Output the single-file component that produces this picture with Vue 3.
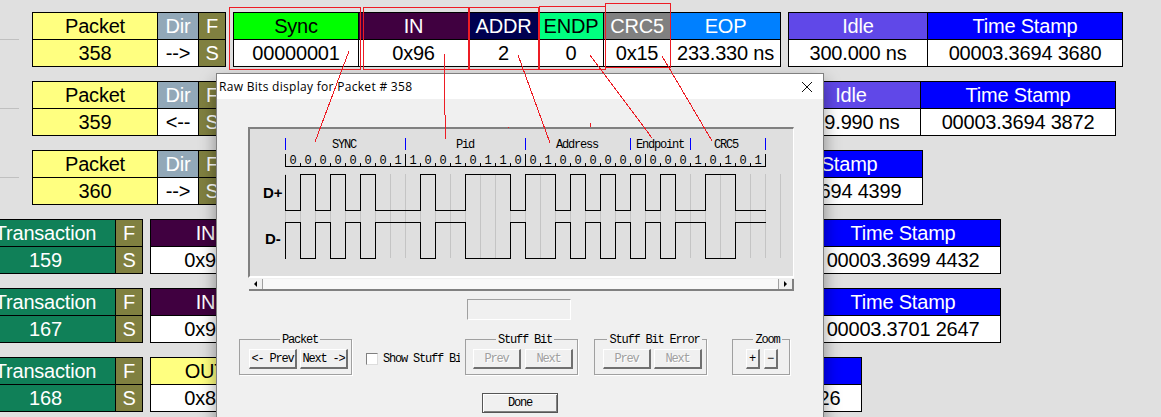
<script setup>
const packetCols = (num, dir) => [
  { title: 'Packet', value: num, width: 125, cls: 'packet' },
  { title: 'Dir', value: dir, width: 41, cls: 'dir' },
  { title: 'F', value: 'S', width: 27, cls: 'flag' },
]
const transCols = (num) => [
  { title: 'Transaction', value: num, width: 140, cls: 'trans' },
  { title: 'F', value: 'S', width: 27, cls: 'flag' },
]
const stamp = (value) => ({ title: 'Time Stamp', value, width: 195, cls: 'stamp' })

// gap = distance from whatever is left of the group
const rows = [
  {
    stub: true,
    groups: [
      { gap: 13, cols: packetCols('358', '-->') },
      {
        gap: 7,
        cols: [
          { title: 'Sync', value: '00000001', width: 125, cls: 'sync' },
          { title: 'IN', value: '0x96', width: 110, cls: 'in' },
          { title: 'ADDR', value: '2', width: 70, cls: 'addr' },
          { title: 'ENDP', value: '0', width: 65, cls: 'endp' },
          { title: 'CRC5', value: '0x15', width: 67, cls: 'crc' },
          { title: 'EOP', value: '233.330 ns', width: 110, cls: 'eop' },
        ],
      },
      {
        gap: 7,
        cols: [{ title: 'Idle', value: '300.000 ns', width: 139, cls: 'idle' }, stamp('00003.3694 3680')],
      },
    ],
  },
  {
    stub: true,
    groups: [
      { gap: 13, cols: packetCols('359', '<--') },
      {
        gap: 555,
        cols: [{ title: 'Idle', value: '299.990 ns', width: 139, cls: 'idle' }, stamp('00003.3694 3872')],
      },
    ],
  },
  {
    stub: true,
    groups: [
      { gap: 13, cols: packetCols('360', '-->') },
      { gap: 501, cols: [stamp('00003.3694 4399')] },
    ],
  },
  {
    groups: [
      { gap: -25, cols: transCols('159') },
      { gap: 7, cols: [{ title: 'IN', value: '0x96', width: 110, cls: 'in' }] },
      { gap: 544, cols: [stamp('00003.3699 4432')] },
    ],
  },
  {
    groups: [
      { gap: -25, cols: transCols('167') },
      { gap: 7, cols: [{ title: 'IN', value: '0x96', width: 110, cls: 'in' }] },
      { gap: 544, cols: [stamp('00003.3701 2647')] },
    ],
  },
  {
    groups: [
      { gap: -25, cols: transCols('168') },
      { gap: 7, cols: [{ title: 'OUT', value: '0x87', width: 110, cls: 'out' }] },
      { gap: 405, cols: [stamp('00003.3703 0026')] },
    ],
  },
]

// waveform
const X0 = 285
const BIT = 15
const bits = '00000001100101100100000000010101'.split('')
const levels = '01010100010011101101010101001100'.split('').map(Number)
const gridX = Array.from({ length: 34 }, (_, i) => X0 + i * BIT)
const tickX = Array.from({ length: 33 }, (_, i) => X0 + i * BIT)
const majorX = [285, 405, 525, 645, 765]
const blueX = [285, 405, 525, 630, 690, 765]
const fields = [
  { name: 'SYNC', x: 344 },
  { name: 'Pid', x: 465 },
  { name: 'Address', x: 577 },
  { name: 'Endpoint', x: 660 },
  { name: 'CRC5', x: 726 },
]

const tracePoints = (high, low, invert) => {
  const pts = []
  let prevY = invert ? low : high
  levels.forEach((l, i) => {
    const y = (invert ? !l : l) ? high : low
    const x = X0 + i * BIT
    pts.push(`${x},${prevY}`, `${x},${y}`)
    prevY = y
  })
  pts.push(`${X0 + 32 * BIT},${prevY}`)
  return pts.join(' ')
}
const dPlus = tracePoints(174, 210, false)
const dMinus = tracePoints(222, 258, true)

const redBoxes = [
  { x: 229.5, y: 7.5, w: 131, h: 62 },
  { x: 363.5, y: 7.5, w: 105, h: 62 },
  { x: 469.5, y: 7.5, w: 69, h: 62 },
  { x: 539.5, y: 6.5, w: 66, h: 63 },
  { x: 605.5, y: 3.5, w: 65, h: 64 },
]
const redLines = [
  '349,51 315,142',
  '444,53 445,115 446,139',
  '518,55 550,143',
  '590,55 652,138',
  '662,56 712,141',
  '508,127 508,128',
  '590,123 590,127',
]
</script>

<template>
  <div class="page">
    <div v-for="(row, r) in rows" :key="r" class="row">
      <div v-if="row.stub" class="stub"></div>
      <div
        v-for="(group, g) in row.groups"
        :key="g"
        class="group"
        :style="{ marginLeft: group.gap + 'px' }"
      >
        <div v-for="col in group.cols" :key="col.title" class="col" :class="col.cls" :style="{ width: col.width + 'px' }">
          <div class="head">{{ col.title }}</div>
          <div class="val">{{ col.value }}</div>
        </div>
      </div>
    </div>

    <div class="dialog">
      <div class="titlebar">
        <span>Raw Bits display for Packet # 358</span>
        <svg class="close" width="10" height="10" viewBox="0 0 10 10">
          <path d="M0 0L10 10M10 0L0 10" stroke="#111" stroke-width="1" fill="none" />
        </svg>
      </div>

      <div class="panel">
        <svg class="wave" width="544" height="147" viewBox="250 129 544 147" shape-rendering="crispEdges">
          <line v-for="x in gridX" :key="x" :x1="x + 0.5" :x2="x + 0.5" y1="174" y2="258" class="grid" />
          <line v-for="x in blueX" :key="x" :x1="x + 0.5" :x2="x + 0.5" y1="138" y2="150" class="blue" />
          <text v-for="f in fields" :key="f.name" :x="f.x" y="148" class="mono" text-anchor="middle">{{ f.name }}</text>
          <line x1="285" x2="766" y1="166.5" y2="166.5" class="ink" />
          <line v-for="x in tickX" :key="x" :x1="x + 0.5" :x2="x + 0.5" y1="163" y2="167" class="ink" />
          <line v-for="x in majorX" :key="x" :x1="x + 0.5" :x2="x + 0.5" y1="154" y2="167" class="ink" />
          <text v-for="(b, i) in bits" :key="i" :x="X0 + i * BIT + 7.5" y="164" class="mono" text-anchor="middle">{{ b }}</text>
          <polyline :points="dPlus" class="trace" transform="translate(0.5 0.5)" />
          <polyline :points="dMinus" class="trace" transform="translate(0.5 0.5)" />
          <text x="263" y="198" class="dlabel">D+</text>
          <text x="265" y="244" class="dlabel">D-</text>
        </svg>
      </div>

      <div class="scrollbar">
        <div class="sb-btn"><i class="arrow-left"></i></div>
        <div class="sb-track"></div>
        <div class="sb-btn right"><i class="arrow-right"></i></div>
      </div>

      <div class="status"></div>

      <div class="controls">
        <fieldset class="box packet-box">
          <legend>Packet</legend>
          <button class="btn">&lt;- Prev</button>
          <button class="btn">Next -&gt;</button>
        </fieldset>
        <label class="check">
          <input type="checkbox" />
          <span>Show Stuff Bit</span>
        </label>
        <fieldset class="box stuff-box">
          <legend>Stuff Bit</legend>
          <button class="btn" disabled>Prev</button>
          <button class="btn" disabled>Next</button>
        </fieldset>
        <fieldset class="box error-box">
          <legend>Stuff Bit Error</legend>
          <button class="btn" disabled>Prev</button>
          <button class="btn" disabled>Next</button>
        </fieldset>
        <fieldset class="box zoom-box">
          <legend>Zoom</legend>
          <button class="btn small">+</button>
          <button class="btn small">−</button>
        </fieldset>
      </div>

      <div class="footer">
        <button class="done">Done</button>
      </div>
    </div>

    <!-- hand drawn annotations on top of the capture -->
    <svg class="marks" width="1161" height="417" viewBox="0 0 1161 417">
      <rect v-for="(b, i) in redBoxes" :key="i" :x="b.x" :y="b.y" :width="b.w" :height="b.h" class="red" />
      <polyline v-for="(l, i) in redLines" :key="i" :points="l" class="red" shape-rendering="crispEdges" />
    </svg>
  </div>
</template>

<style>
html,
body {
  margin: 0;
  background: #e0e0e0;
}
</style>

<style scoped>
.page {
  position: relative;
  width: 1161px;
  height: 417px;
  overflow: hidden;
  background: #e0e0e0;
  padding-top: 12px;
  box-sizing: border-box;
  display: flex;
  flex-direction: column;
  gap: 14px;
  font-family: "Liberation Sans", Arial, sans-serif;
}

.row {
  display: flex;
  align-items: center;
  height: 55px;
  flex: none;
}

.stub {
  width: 19px;
  height: 1px;
  background: #c0c0c0;
  flex: none;
}

.group {
  display: flex;
  flex: none;
  border: 1px solid #000;
  border-right: none;
  background: #fff;
}

.col {
  flex: none;
  box-sizing: border-box;
  border-right: 1px solid #000;
  text-align: center;
  font-size: 20px;
  letter-spacing: -0.2px;
  color: #000;
}

.head,
.val {
  height: 26px;
  line-height: 26px;
  white-space: nowrap;
}

.head {
  border-bottom: 1px solid #000;
}

.packet .head,
.packet .val,
.out .head {
  background: #ffff80;
}
.dir .head {
  background: #92a8b8;
  color: #fff;
}
.flag .head,
.flag .val {
  background: #808040;
  color: #fff;
}
.trans .head,
.trans .val {
  background: #108058;
  color: #fff;
}
.sync .head {
  background: #00ff00;
}
.in .head {
  background: #400040;
  color: #fff;
}
.addr .head {
  background: #000050;
  color: #fff;
}
.endp .head {
  background: #00ff80;
}
.crc .head {
  background: #808080;
  color: #fff;
}
.eop .head {
  background: #0080ff;
  color: #fff;
}
.idle .head {
  background: #6048e8;
  color: #fff;
}
.stamp .head {
  background: #0000ff;
  color: #fff;
}

/* dialog window */
.dialog {
  position: absolute;
  left: 216px;
  top: 73px;
  width: 608px;
  height: 360px;
  box-sizing: border-box;
  border: 1px solid #808080;
  background: #f0f0f0;
  box-shadow: 0 8px 16px rgba(0, 0, 0, 0.4);
}

.titlebar {
  height: 25px;
  background: #fff;
  display: flex;
  align-items: center;
  justify-content: space-between;
  padding: 0 11px 0 2px;
  font-family: "Open Sans", "Noto Sans", sans-serif;
  font-size: 12px;
  letter-spacing: 0.3px;
  color: #000;
}

.close {
  flex: none;
}

.panel {
  margin: 28px 0 0 31px;
  width: 546px;
  height: 151px;
  box-sizing: border-box;
  border-top: 2px solid #808080;
  border-left: 2px solid #808080;
  border-right: 1px solid #fff;
  border-bottom: 2px solid #fff;
  background: #dfdfdf;
}

.wave {
  display: block;
}

.grid {
  stroke: #c4c4c4;
  stroke-width: 1;
}
.blue {
  stroke: #0000ff;
  stroke-width: 1;
}
.ink {
  stroke: #000;
  stroke-width: 1;
}
.trace {
  fill: none;
  stroke: #000;
  stroke-width: 1;
}
.mono {
  font-family: "Liberation Mono", monospace;
  font-size: 12px;
  letter-spacing: -1.2px;
  fill: #000;
}
.dlabel {
  font-family: "Liberation Sans", Arial, sans-serif;
  font-size: 15px;
  font-weight: bold;
  fill: #000;
}

.scrollbar {
  margin: 1px 0 0 32px;
  width: 545px;
  height: 12px;
  display: flex;
  box-sizing: border-box;
  border-bottom: 2px solid #808080;
  background: #f8f8f8;
}

.sb-btn {
  width: 14px;
  flex: none;
  display: flex;
  align-items: center;
  justify-content: center;
  background: #f0f0f0;
  border-right: 1px solid #a0a0a0;
  box-sizing: border-box;
}
.sb-btn.right {
  width: 16px;
  border-right: 2px solid #808080;
  border-left: 1px solid #a0a0a0;
}
.sb-track {
  flex: 1;
}
.arrow-left,
.arrow-right {
  width: 0;
  height: 0;
  border-top: 3px solid transparent;
  border-bottom: 3px solid transparent;
}
.arrow-left {
  border-right: 3px solid #000;
}
.arrow-right {
  border-left: 3px solid #000;
}

.status {
  margin: 8px 0 0 250px;
  width: 104px;
  height: 21px;
  box-sizing: border-box;
  border-top: 1px solid #a0a0a0;
  border-left: 1px solid #a0a0a0;
  border-right: 1px solid #fff;
  border-bottom: 1px solid #fff;
}

.controls {
  margin: 12px 0 0 22px;
  display: flex;
  align-items: flex-start;
  font-family: "Liberation Mono", monospace;
  font-size: 12px;
  letter-spacing: -1.2px;
  color: #000;
}

.box {
  margin: 0;
  flex: none;
  box-sizing: border-box;
  height: 43px;
  border: 1px solid #a0a0a0;
  box-shadow: 1px 1px 0 #fff;
  padding: 3px 0 0 8px;
  display: flex;
  gap: 3px;
}
.box legend {
  margin: 0 auto;
  padding: 2px 2px 0;
  line-height: 12px;
}

.packet-box {
  width: 113px;
  padding-left: 9px;
}
.stuff-box {
  width: 113px;
  margin-left: 5px;
  padding-left: 7px;
  gap: 4px;
}
.error-box {
  width: 113px;
  margin-left: 16px;
}
.zoom-box {
  width: 58px;
  margin-left: 25px;
  padding-left: 13px;
  gap: 4px;
}

.btn {
  width: 48px;
  height: 20px;
  padding: 0;
  box-sizing: border-box;
  background: #f0f0f0;
  border: none;
  border-top: 1px solid #fff;
  border-left: 1px solid #fff;
  border-right: 2px solid #707070;
  border-bottom: 2px solid #707070;
  font: inherit;
  letter-spacing: inherit;
  color: #000;
}
.btn:disabled {
  color: #a0a0a0;
  text-shadow: 1px 1px 0 #fff;
}
.btn.small {
  width: 14px;
  letter-spacing: 0;
}

.check {
  flex: none;
  margin: 20px 0 0 14px;
  width: 94px;
  height: 13px;
  display: flex;
  align-items: center;
  gap: 5px;
  overflow: hidden;
  white-space: nowrap;
}
.check input {
  appearance: none;
  margin: 0;
  flex: none;
  width: 12px;
  height: 12px;
  box-sizing: border-box;
  background: #fff;
  border: 1px solid #808080;
  border-right-color: #ddd;
  border-bottom-color: #ddd;
}

.footer {
  margin: 18px 0 0 265px;
}
.done {
  display: block;
  width: 76px;
  height: 20px;
  padding: 0;
  box-sizing: border-box;
  background: #f0f0f0;
  border: 1px solid #555;
  box-shadow: inset 1px 1px 0 #fff, inset -1px -1px 0 #808080;
  font-family: "Liberation Mono", monospace;
  font-size: 12px;
  letter-spacing: -1.2px;
  color: #000;
}

.marks {
  position: absolute;
  left: 0;
  top: 0;
  pointer-events: none;
}
.red {
  fill: none;
  stroke: #ed1c24;
  stroke-width: 1;
}
</style>
